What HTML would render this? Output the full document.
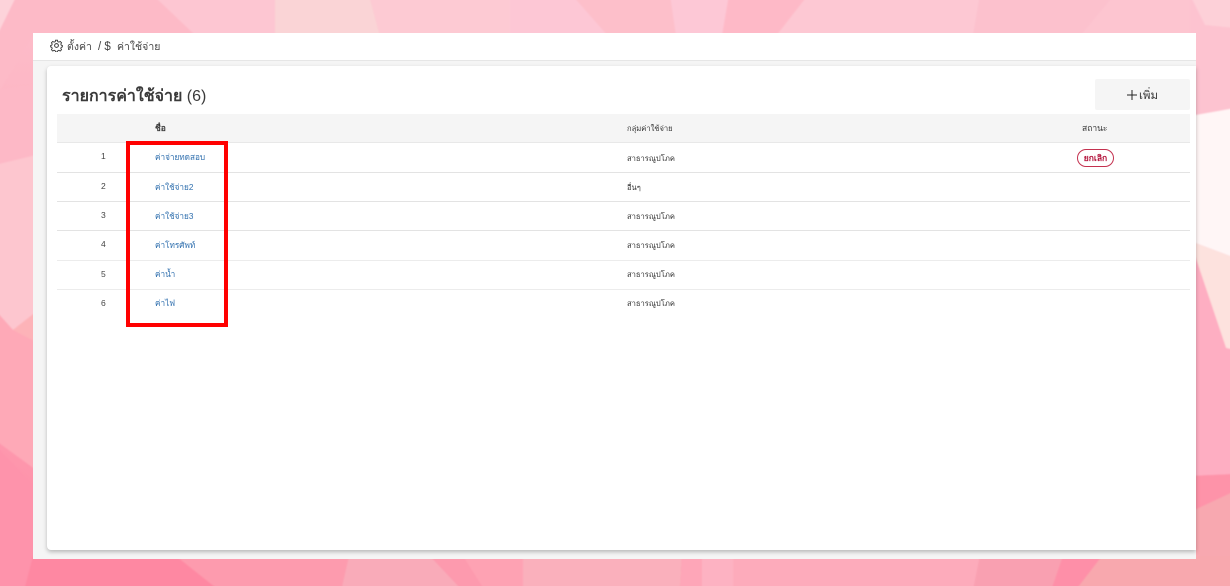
<!DOCTYPE html>
<html lang="th">
<head>
<meta charset="utf-8">
<title>รายการค่าใช้จ่าย</title>
<style>
html,body{margin:0;padding:0;width:1230px;height:586px;overflow:hidden;background:#fdb6c4}
body{position:relative;font-family:"Liberation Sans","Noto Sans CJK SC","DejaVu Sans",sans-serif;color:#333}
.a{position:absolute;white-space:nowrap}
.bg{position:absolute;left:0;top:0}
.panel{position:absolute;left:33px;top:33px;width:1163px;height:526px;background:#f5f5f5}
.head{position:absolute;left:33px;top:33px;width:1163px;height:27px;background:#fff;border-bottom:1px solid #e6e6e6}
.card{position:absolute;left:47px;top:66px;width:1149px;height:484px;background:#fff;border-radius:4px 0 0 4px;box-shadow:0 2px 4px rgba(0,0,0,.25)}
.th{position:absolute;left:57px;top:114px;width:1133px;height:28px;background:#f5f5f5;border-bottom:1px solid #e8e8e8}
.line{position:absolute;left:57px;width:1133px;height:1px;background:#e3e3e3}
.btn{position:absolute;left:1095px;top:79px;width:95px;height:31px;background:#f5f5f5;border-radius:2px}
.t{font-size:8.5px;line-height:12px;color:#333}
.l{font-size:8.2px;line-height:12px;color:#2f6fae;left:155px}
.n{font-size:8.5px;line-height:12px;color:#444;left:101px}
.g{left:627px;font-size:7.6px}
.tag{position:absolute;left:1077px;top:149px;width:35px;height:16px;border:1px solid #c4314f;border-radius:9px;background:#fff;color:#b3123a;font-size:8.5px;line-height:16px;text-align:center;font-weight:bold}
.red{position:absolute;left:126px;top:141px;width:94px;height:178px;border:4px solid #f00}
</style>
</head>
<body>
<svg class="bg" width="1230" height="586" viewBox="0 0 1230 586" xmlns="http://www.w3.org/2000/svg">
<defs>
<linearGradient id="g1" x1="0" y1="0" x2="0" y2="1"><stop offset="0" stop-color="#fdbfcb"/><stop offset="1" stop-color="#fe8ba4"/></linearGradient>
<filter id="b" x="-1%" y="-1%" width="102%" height="102%"><feGaussianBlur stdDeviation="0.7"/></filter>
</defs>
<rect width="1230" height="586" fill="url(#g1)"/>
<g filter="url(#b)">
<!-- top strip -->
<polygon points="-5,-5 17,-5 -5,40" fill="#fdd3da"/>
<polygon points="17,-5 153,-5 196,36 33,36 0,90 -5,40" fill="#fdbac7"/>
<polygon points="153,-5 275,-5 275,36 196,36" fill="#fdc6d2"/>
<polygon points="275,-5 369,-5 380,36 275,36" fill="#fad4d6"/>
<polygon points="369,-5 572,-5 608,36 380,36" fill="#fdcad3"/>
<polygon points="510,-5 572,-5 608,36 510,36" fill="#fdc7d5"/>
<polygon points="572,-5 670,-5 676,36 608,36" fill="#fdbfca"/>
<polygon points="670,-5 729,-5 722,36 676,36" fill="#fdc8d6"/>
<polygon points="729,-5 808,-5 776,36 722,36" fill="#feb9c7"/>
<polygon points="808,-5 980,-5 973,36 776,36" fill="#fdc8d3"/>
<polygon points="980,-5 1114,-5 1080,36 973,36" fill="#fcc1cd"/>
<polygon points="1114,-5 1196,-5 1198,36 1080,36" fill="#fdc5d0"/>
<polygon points="1190,-5 1235,-5 1235,108 1190,116" fill="#fdc3d0"/>
<polygon points="1190,-5 1235,-5 1235,28 1205,25" fill="#fdd0d8"/>
<!-- left side -->
<polygon points="-5,90 36,85 36,160 -5,165" fill="#fdb8c6"/>
<polygon points="-5,165 36,155 36,312 13,330 -5,310" fill="#fdc6cf"/>
<polygon points="-5,310 13,330 36,342 36,470 -5,440" fill="#fea9b7"/>
<polygon points="13,330 36,312 36,342" fill="#fdb3b8"/>
<polygon points="-5,445 36,487 36,562 -5,591" fill="#fe93ab"/>
<!-- right side -->
<polygon points="1190,116 1235,108 1235,258 1190,241" fill="#fff6f6"/>
<polygon points="1190,241 1235,258 1235,350 1226,348" fill="#fde2de"/>
<polygon points="1190,241 1226,348 1235,350 1235,474 1190,476" fill="#feaec2"/>
<polygon points="1190,476 1235,474 1235,491 1190,512" fill="#fe93a9"/>
<polygon points="1190,512 1235,491 1235,591 1190,591" fill="#f8a8b0"/>
<!-- bottom strip -->
<polygon points="-5,556 33,556 24,591 -5,591" fill="#fe93ab"/>
<polygon points="33,556 176,556 220,591 24,591" fill="#fe88a2"/>
<polygon points="176,556 349,556 341,591 220,591" fill="#fd9bae"/>
<polygon points="349,556 430,556 463,591 341,591" fill="#f9abb9"/>
<polygon points="430,556 463,556 485,591 463,591" fill="#fd9aae"/>
<polygon points="463,556 523,556 523,591 485,591" fill="#fea2b3"/>
<polygon points="523,556 682,556 680,591 523,591" fill="#fab0bc"/>
<polygon points="682,556 702,556 702,591 680,591" fill="#fea6b8"/>
<polygon points="702,556 733,556 733,591 702,591" fill="#fdb2c2"/>
<polygon points="733,556 980,556 973,591 733,591" fill="#fdabbb"/>
<polygon points="980,556 1063,556 1051,591 973,591" fill="#f9a0b1"/>
<polygon points="1063,556 1102,556 1075,591 1051,591" fill="#fe8fa8"/>
<polygon points="1102,556 1235,556 1235,591 1075,591" fill="#f8a8ae"/>
</g>
</svg>

<div class="panel"></div>
<div class="head"></div>
<svg class="a" style="left:50px;top:39px" width="13" height="13" viewBox="0 0 24 24" fill="none" stroke="#333" stroke-width="1.8">
<circle cx="12" cy="12" r="3.5"/>
<path d="M10 2h4l.6 3 2.400 1 2.600-1.600 2.800 2.800-1.600 2.600 1 2.400 2.200.6v3l-2.200.6-1 2.400 1.600 2.600-2.800 2.800-2.600-1.600-2.400 1-.6 2.300h-4l-.6-2.300-2.400-1-2.600 1.600-2.800-2.800 1.600-2.600-1-2.400L0 15.800v-3l2.200-.6 1-2.400-1.600-2.600 2.800-2.800L7 6l2.400-1z" transform="translate(1.200 .5) scale(.9)"/>
</svg>
<div class="a" style="left:67px;top:40px;font-size:10.500px;line-height:14px;color:#444">ตั้งค่า</div>
<div class="a" style="left:98px;top:40px;font-size:11.500px;line-height:14px;color:#444">/ $</div>
<div class="a" style="left:117px;top:40px;font-size:10.500px;line-height:14px;color:#444">ค่าใช้จ่าย</div>

<div class="card"></div>
<div class="a" style="left:62px;top:86px;font-size:16px;line-height:22px;font-weight:bold;color:#3a3a3a">รายการค่าใช้จ่าย <span style="font-weight:normal">(6)</span></div>

<div class="btn"></div>
<svg class="a" style="left:1127px;top:90px" width="10" height="10" viewBox="0 0 10 10"><path d="M5 0v10M0 5h10" stroke="#222" stroke-width="1"/></svg>
<div class="a" style="left:1139px;top:89px;font-size:11.500px;line-height:14px;color:#333">เพิ่ม</div>

<div class="th"></div>
<div class="a t" style="left:155px;top:122px;font-weight:bold">ชื่อ</div>
<div class="a t g" style="top:123px">กลุ่มค่าใช้จ่าย</div>
<div class="a t" style="left:1082px;top:122px">สถานะ</div>

<div class="line" style="top:172px"></div>
<div class="line" style="top:201px"></div>
<div class="line" style="top:230px"></div>
<div class="line" style="top:260px;background:#ececec"></div>
<div class="line" style="top:289px;background:#ececec"></div>

<div class="a n" style="top:150px">1</div>
<div class="a n" style="top:180px">2</div>
<div class="a n" style="top:209px">3</div>
<div class="a n" style="top:238px">4</div>
<div class="a n" style="top:268px">5</div>
<div class="a n" style="top:297px">6</div>

<div class="a l" style="top:152px">ค่าจ่ายทดสอบ</div>
<div class="a l" style="top:182px">ค่าใช้จ่าย2</div>
<div class="a l" style="top:211px">ค่าใช้จ่าย3</div>
<div class="a l" style="top:240px">ค่าโทรศัพท์</div>
<div class="a l" style="top:269px">ค่าน้ำ</div>
<div class="a l" style="top:298px">ค่าไฟ</div>

<div class="a t g" style="top:153px">สาธารณูปโภค</div>
<div class="a t g" style="top:182px">อื่นๆ</div>
<div class="a t g" style="top:211px">สาธารณูปโภค</div>
<div class="a t g" style="top:240px">สาธารณูปโภค</div>
<div class="a t g" style="top:269px">สาธารณูปโภค</div>
<div class="a t g" style="top:298px">สาธารณูปโภค</div>

<div class="tag">ยกเลิก</div>
<div class="red"></div>
</body>
</html>
